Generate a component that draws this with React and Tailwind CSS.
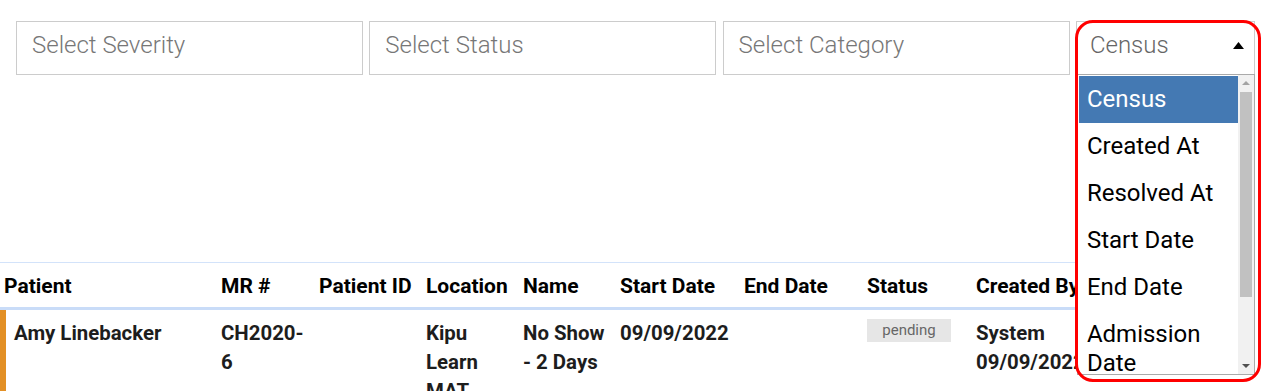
import React from 'react';

const font = { fontFamily: 'Roboto, "Liberation Sans", sans-serif' };

const filters = ["Select Severity", "Select Status", "Select Category"];

const columns = [
  { key: "patient", label: "Patient", w: "w-[217px]" },
  { key: "mr", label: "MR #", w: "w-[98px]" },
  { key: "pid", label: "Patient ID", w: "w-[107px]" },
  { key: "location", label: "Location", w: "w-[97px]" },
  { key: "name", label: "Name", w: "w-[97px]" },
  { key: "start", label: "Start Date", w: "w-[124px]" },
  { key: "end", label: "End Date", w: "w-[123px]" },
  { key: "status", label: "Status", w: "w-[109px]" },
  { key: "created", label: "Created By", w: "w-[140px]" },
];

const options = ["Census", "Created At", "Resolved At", "Start Date", "End Date", "Admission Date"];

const SortDropdown = () => (
  <div className="relative w-[179px] h-[54px] border border-[#cccccc] bg-white">
    <div className="flex items-start justify-between h-full pl-[13px] pr-[10px] pt-[9px]">
      <span className="text-[24px] leading-[28px] font-light text-[#666]">Census</span>
      <svg className="mt-[11px]" width="11" height="7" viewBox="0 0 11 7"><path d="M5.5 0L11 7H0z" fill="#000" /></svg>
    </div>
    <div className="absolute left-0 top-[52px] w-[178px] h-[301px] bg-white border border-[#aaaaaa] flex z-10">
      <div className="flex-1 pt-[1px] pl-[1px]">
        {options.map((o, i) => (
          <div
            key={o}
            className={`px-[8px] py-[9px] text-[24px] leading-[29px] ${i === 0 ? "bg-[#4479b3] text-white" : "text-black"}`}
          >
            {o}
          </div>
        ))}
      </div>
      <div className="w-[16px] bg-[#f1f1f1] flex flex-col items-center">
        <svg width="16" height="17" viewBox="0 0 16 17"><path d="M8 6l4 4H4z" fill="#a3a3a3" /></svg>
        <div className="w-[12px] h-[205px] bg-[#c1c1c1]" />
        <div className="flex-1" />
        <svg width="16" height="17" viewBox="0 0 16 17"><path d="M4 7h8l-4 4z" fill="#505050" /></svg>
      </div>
    </div>
    <div className="absolute left-[-2px] top-[-2px] w-[186px] h-[362px] border-[3px] border-[#ff0000] rounded-[18px] z-20 pointer-events-none" />
  </div>
);

export default function App() {
  return (
    <div className="w-[1272px] h-[391px] overflow-hidden bg-white text-black" style={font}>
      <div className="flex gap-[6.3px] pl-4 pt-[21px]">
        {filters.map((f) => (
          <div key={f} className="w-[347px] h-[54px] border border-[#cccccc] pl-[15px] pt-[9px]">
            <span className="text-[24px] leading-[28px] font-light text-[#777]">{f}</span>
          </div>
        ))}
        <SortDropdown />
      </div>

      <table className="mt-[187px] border-collapse text-left text-[20px]">
        <thead>
          <tr className="border-t border-[#d3e3fa] border-b-[3px] border-b-[#c9dcf8]">
            {columns.map((c) => (
              <th key={c.key} className={`${c.w} h-[46px] px-[4px] pt-[3px] text-[21px] font-bold whitespace-nowrap`}>
                {c.label}
              </th>
            ))}
          </tr>
        </thead>
        <tbody>
          <tr className="align-top font-bold text-[20.4px] leading-[29px] text-[#1d1d1d]">
            <td className="shadow-[inset_6px_0_0_#e39026] pl-[14px] pt-[9px]">Amy Linebacker</td>
            <td className="px-[4px] pt-[9px]">CH2020-<br />6</td>
            <td className="px-[4px] pt-[9px]"></td>
            <td className="px-[4px] pt-[9px]">Kipu<br />Learn<br />MAT</td>
            <td className="px-[4px] pt-[9px]">No Show<br />- 2 Days</td>
            <td className="px-[4px] pt-[9px]">09/09/2022</td>
            <td className="px-[4px] pt-[9px]"></td>
            <td className="px-[4px] pt-[9px]">
              <div className="w-[84px] h-[23px] bg-[#e6e6e6] text-center text-[15px] leading-[23px] font-normal text-[#666]">pending</div>
            </td>
            <td className="px-[4px] pt-[9px] whitespace-nowrap">System<br />09/09/2022</td>
          </tr>
        </tbody>
      </table>
    </div>
  );
}
